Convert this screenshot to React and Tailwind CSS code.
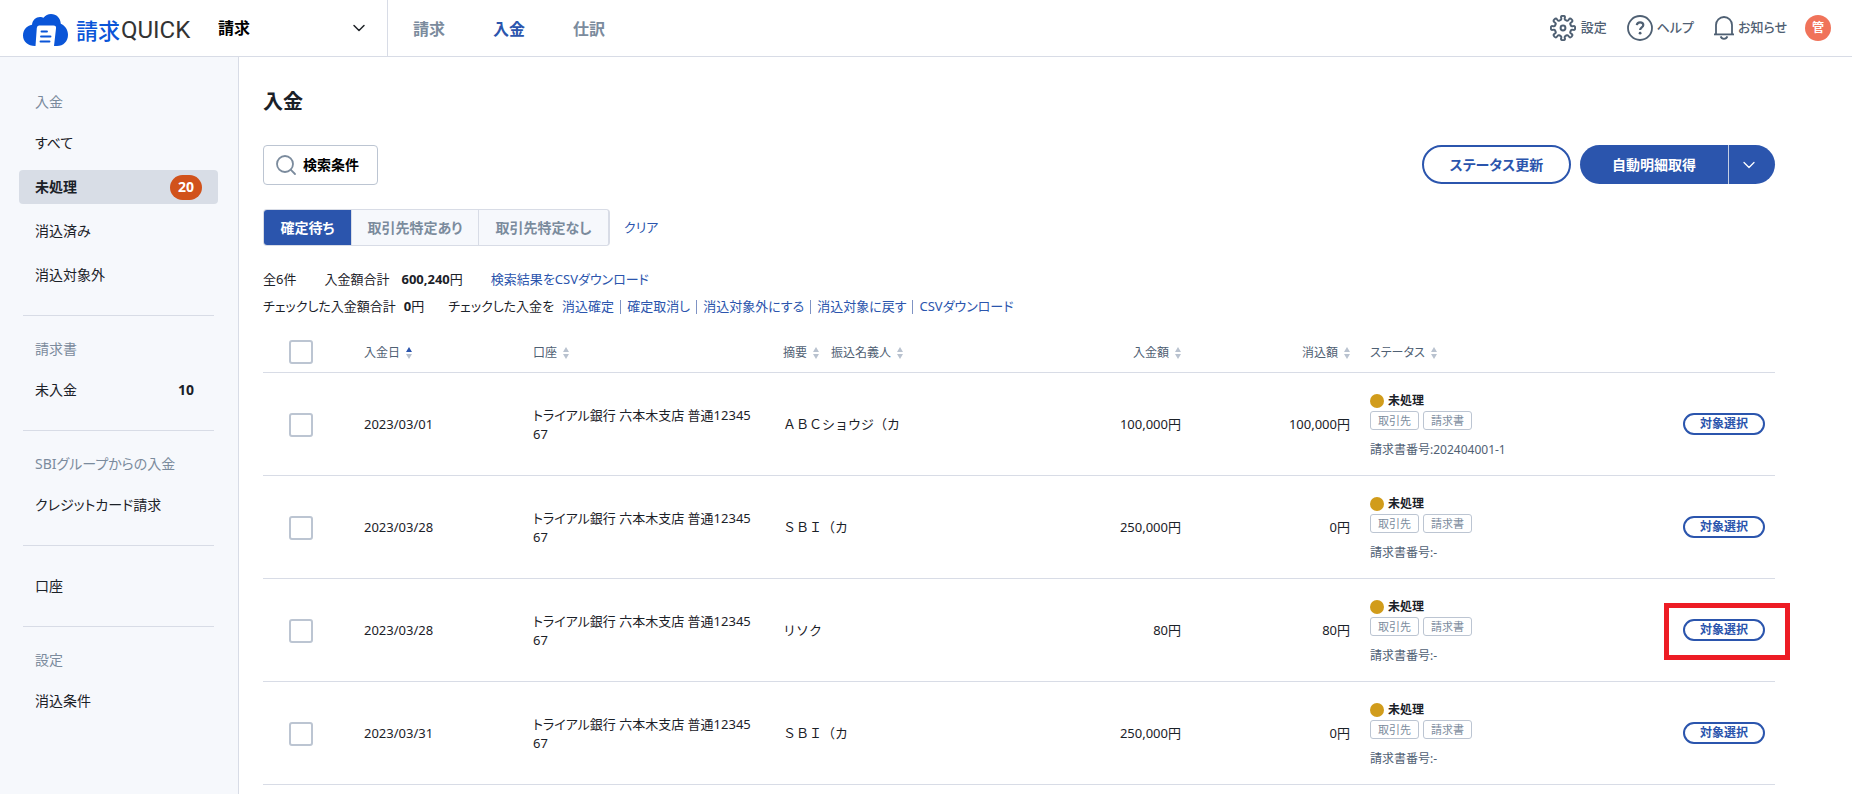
import React, { useState } from 'react';
import { ChevronDown, Search } from 'lucide-react';

const navItems = [
  { label: '請求', active: false },
  { label: '入金', active: true },
  { label: '仕訳', active: false },
];

const sideSections = [
  {
    title: '入金',
    items: [
      { label: 'すべて' },
      { label: '未処理', badge: 20, active: true },
      { label: '消込済み' },
      { label: '消込対象外' },
    ],
  },
  { title: '請求書', items: [{ label: '未入金', count: 10 }] },
  { title: 'SBIグループからの入金', items: [{ label: 'クレジットカード請求' }] },
  { items: [{ label: '口座' }] },
  { title: '設定', items: [{ label: '消込条件' }] },
];

const bulkActions = ['消込確定', '確定取消し', '消込対象外にする', '消込対象に戻す', 'CSVダウンロード'];

const account = 'トライアル銀行 六本木支店 普通1234567';

const deposits = [
  { id: 1, date: '2023/03/01', payer: 'ＡＢＣショウジ（カ', amount: '100,000円', cleared: '100,000円', invoice: '202404001-1' },
  { id: 2, date: '2023/03/28', payer: 'ＳＢＩ（カ', amount: '250,000円', cleared: '0円', invoice: '-' },
  { id: 3, date: '2023/03/28', payer: 'リソク', amount: '80円', cleared: '80円', invoice: '-', highlight: true },
  { id: 4, date: '2023/03/31', payer: 'ＳＢＩ（カ', amount: '250,000円', cleared: '0円', invoice: '-' },
];

// Eight rounded teeth around a 26px circle, smoothed through the midpoints
const gearPath = (() => {
  const pts = [];
  for (let i = 0; i < 8; i++) {
    [[-22.5, 8.2], [-9, 8.6], [-11, 12.4], [11, 12.4], [9, 8.6]].forEach(([offset, r]) => {
      const a = ((i * 45 + offset) * Math.PI) / 180;
      pts.push([13 + r * Math.sin(a), 13 - r * Math.cos(a)]);
    });
  }
  const mid = (p, q) => `${((p[0] + q[0]) / 2).toFixed(2)} ${((p[1] + q[1]) / 2).toFixed(2)}`;
  const curves = pts.map((p, i) => `Q${p[0].toFixed(2)} ${p[1].toFixed(2)} ${mid(p, pts[(i + 1) % pts.length])}`);
  return `M${mid(pts[pts.length - 1], pts[0])}${curves.join('')}Z`;
})();

function GearIcon() {
  return (
    <svg className="w-[26px] h-[26px]" viewBox="0 0 26 26" fill="none" stroke="currentColor" strokeWidth="2" strokeLinejoin="round">
      <path d={gearPath} />
      <circle cx="13" cy="13" r="2.4" />
    </svg>
  );
}

function HelpIcon() {
  return (
    <svg className="w-[26px] h-[26px]" viewBox="0 0 26 26" fill="none" stroke="currentColor" strokeWidth="1.8">
      <circle cx="13" cy="13" r="12" />
      <path d="M9.8 10.2c.2-1.9 1.5-2.9 3.3-2.9s3.2 1.1 3.2 2.7c0 2.4-3.2 2.5-3.2 5.1" strokeWidth="2.2" />
      <circle cx="13.1" cy="18.2" r="1.4" fill="currentColor" stroke="none" />
    </svg>
  );
}

function BellIcon() {
  return (
    <svg className="w-5 h-[26px]" viewBox="0 0 20 26" fill="none" stroke="currentColor" strokeWidth="1.8">
      <path d="M2 19.2V10a8 8 0 0 1 16 0v9.2" />
      <path d="M0 19.4h20" />
      <path d="M6.6 21.4c.5 1.4 1.8 2.4 3.4 2.4s2.9-1 3.4-2.4" />
    </svg>
  );
}

function Logo() {
  return (
    <a href="#" className="flex items-center w-[168px] pt-1 shrink-0 whitespace-nowrap" aria-label="請求QUICK">
      <svg className="w-[45px] h-8 shrink-0" viewBox="0 0 45 32">
        <path
          d="M12 32C5 32 0 27.500 0 21.500 0 15.500 4 11.500 9 10.700 9.500 6 13 3 17 3c1.500 0 2.500.3 3.500.8C22.300 1.400 25 0 28 0c5.500 0 9.500 4 9.800 9.700C42 11.500 45 15.800 45 20.800 45 27.500 40.500 32 34 32Z"
          fill="#0a55d8"
        />
        <path d="M16 11.500H30.500Q33.500 11.500 33 14.500L31 32H12.500L13.800 14Q14 11.500 16 11.500Z" fill="#fff" />
        <path d="M18.500 17.500h5.500M18 22.500h9.500M17.500 27.500h9" stroke="#0a55d8" strokeWidth="1.900" strokeLinecap="round" />
      </svg>
      <span className="ml-2 text-[22px] font-medium leading-8 text-[#0a55d8]">請求</span>
      <span className="ml-px font-['Roboto',sans-serif] text-2xl leading-8 text-[#333]">QUICK</span>
    </a>
  );
}

function Header() {
  return (
    <header className="h-[57px] shrink-0 flex items-stretch border-b border-[#d8dce6] bg-white pl-[23px] pr-[21px]">
      <Logo />
      <div className="relative flex items-center w-[197px] shrink-0 border-r border-[#d8dce6]">
        <select aria-label="サービス" className="appearance-none w-full h-full pl-[27px] font-bold text-base text-black bg-transparent outline-none">
          <option>請求</option>
        </select>
        <ChevronDown className="absolute right-[18px] w-5 h-5 text-[#1f2328] pointer-events-none" strokeWidth={1.8} />
      </div>
      <nav className="flex items-center gap-12 pl-[25px] pt-0.5 font-bold text-base">
        {navItems.map((item) => (
          <a key={item.label} href="#" className={item.active ? 'text-[#2b55ad]' : 'text-[#7b8b9d]'}>
            {item.label}
          </a>
        ))}
      </nav>
      <div className="ml-auto flex items-center text-[13px] font-medium text-[#4f6073]">
        <a href="#" className="flex items-center gap-[5px]"><GearIcon />設定</a>
        <a href="#" className="ml-5 flex items-center gap-1"><HelpIcon />ヘルプ</a>
        <a href="#" className="ml-5 flex items-center gap-1"><BellIcon />お知らせ</a>
        <button className="ml-[18px] w-[26px] h-[26px] rounded-full bg-[#f0735a] text-white text-xs font-bold">管</button>
      </div>
    </header>
  );
}

function Sidebar() {
  return (
    <aside className="w-[239px] shrink-0 bg-[#f6f8fc] border-r border-[#d8dce6] pt-3 text-sm leading-5 text-[#1b2128]">
      {sideSections.map((section, i) => (
        <section key={i} className={i > 0 ? 'before:block before:h-px before:ml-[23px] before:mr-6 before:bg-[#d8dce6]' : ''}>
          <div className="py-[23px]">
            {section.title && <h2 className="pl-[35px] mb-3.5 text-[#7b8b9d]">{section.title}</h2>}
            <ul className="flex flex-col gap-2.5 pl-[19px] pr-5">
              {section.items.map((item) => (
                <li key={item.label}>
                  <a
                    href="#"
                    className={`h-[34px] px-4 flex items-center justify-between rounded ${
                      item.active ? 'bg-[#d8dde6] font-bold' : ''
                    }`}
                  >
                    <span>{item.label}</span>
                    {item.badge && (
                      <span className="h-[25px] w-8 flex items-center justify-center rounded-full bg-[#d1521b] text-white">{item.badge}</span>
                    )}
                    {item.count && <span className="w-8 text-center font-bold">{item.count}</span>}
                  </a>
                </li>
              ))}
            </ul>
          </div>
        </section>
      ))}
    </aside>
  );
}

function SortIcon({ asc }) {
  return (
    <svg className="w-1.5 h-3" viewBox="0 0 6 12" fill="#b9c2cf">
      <path d="M3 0L6 5H0Z" fill={asc ? '#2b55ad' : undefined} />
      <path d="M0 7H6L3 12Z" />
    </svg>
  );
}

function SortButton({ label, asc }) {
  return (
    <button className="flex items-center gap-1.5 pt-0.5">
      {label}
      <SortIcon asc={asc} />
    </button>
  );
}

function CheckBox({ label }) {
  return (
    <input
      type="checkbox"
      aria-label={label}
      className="block ml-4 w-6 h-6 appearance-none rounded-[3px] border-2 border-[#bcc5d2] bg-white checked:bg-[#2b55ad]"
    />
  );
}

function DepositRow({ deposit }) {
  return (
    <tr className="h-[103px] border-b border-[#d8dce6]">
      <td className="px-2.5 pt-0.5">
        <CheckBox label={`${deposit.date} ${deposit.payer}`} />
      </td>
      <td className="px-2.5 pt-0.5">{deposit.date}</td>
      <td className="pl-2.5 pr-4 pt-0.5 break-all">{account}</td>
      <td className="px-2.5 pt-0.5 [font-feature-settings:normal]">{deposit.payer}</td>
      <td className="px-2.5 pt-0.5 text-right">{deposit.amount}</td>
      <td className="px-2.5 pt-0.5 text-right">{deposit.cleared}</td>
      <td className="px-2.5 pt-1.5 text-xs text-[#4f6073]">
        <div className="flex items-center gap-1 h-4 font-bold text-[#1b2128]">
          <span className="w-3.5 h-3.5 rounded-full bg-[#d19c1b]" />
          未処理
        </div>
        <div className="mt-0.5 flex gap-1 text-[11px] leading-[17px] text-[#7b8b9d]">
          <span className="px-[7px] rounded-[3px] border border-[#bcc5d2]">取引先</span>
          <span className="px-[7px] rounded-[3px] border border-[#bcc5d2]">請求書</span>
        </div>
        <div className="mt-2.5 leading-5 whitespace-nowrap">請求書番号:{deposit.invoice}</div>
      </td>
      <td className="px-2.5">
        <div className="relative w-fit ml-auto">
          <button className="block w-[82px] h-[22px] rounded-full border-2 border-[#2b55ad] text-xs leading-none font-bold text-[#2b55ad] bg-white">
            対象選択
          </button>
          {deposit.highlight && (
            <div className="absolute -top-4 -bottom-[19px] -left-[19px] -right-[25px] border-[5px] border-[#ed1c24] pointer-events-none" />
          )}
        </div>
      </td>
    </tr>
  );
}

const tabs = ['確定待ち', '取引先特定あり', '取引先特定なし'];

export default function App() {
  const [tab, setTab] = useState(tabs[0]);

  return (
    <div className="min-h-screen flex flex-col bg-white font-['Noto_Sans','Noto_Sans_CJK_JP',sans-serif] [font-feature-settings:'palt'] text-[#1b2128]">
      <Header />
      <div className="flex-1 flex">
        <Sidebar />
        <main className="flex-1 min-w-0 pl-6 pr-[77px] pt-[31px] text-sm">
          <h1 className="text-xl leading-7 font-bold">入金</h1>

          <div className="mt-[29px] flex items-start">
            <button className="h-10 w-[115px] flex items-center pl-[10px] gap-[5px] rounded border border-[#bcc5d2] font-bold text-black">
              <Search className="w-6 h-6 text-[#7b8b9d]" strokeWidth={1.8} />
              検索条件
            </button>
            <button className="ml-auto h-[39px] w-[149px] rounded-full border-2 border-[#2b55ad] font-bold text-[#2b55ad]">ステータス更新</button>
            <div className="ml-[9px] h-[39px] flex rounded-full overflow-hidden bg-[#2b55ad] text-white">
              <button className="w-[148px] font-bold">自動明細取得</button>
              <button aria-label="その他の取得方法" className="w-[47px] border-l border-[#c5cfe4] flex items-center pl-2.5">
                <ChevronDown className="w-5 h-5" strokeWidth={1.5} />
              </button>
            </div>
          </div>

          <div className="mt-6 flex items-center">
            <div className="h-[37px] flex rounded border border-r-2 border-[#d8dce6] overflow-hidden">
              {tabs.map((t) => (
                <button
                  key={t}
                  onClick={() => setTab(t)}
                  className={`font-bold border-r last:border-r-0 border-[#d8dce6] first:w-[88px] w-[127px] last:w-[129px] ${
                    t === tab ? 'bg-[#2b55ad] text-white' : 'bg-[#f6f8fc] text-[#7b8b9d]'
                  }`}
                >
                  {t}
                </button>
              ))}
            </div>
            <a href="#" className="ml-3.5 text-[13px] text-[#2b55ad]">クリア</a>
          </div>

          <div className="mt-5 text-[13px] leading-[27px]">
            <div className="flex">
              <span>全6件</span>
              <span className="ml-7">入金額合計</span>
              <span className="ml-3"><b>600,240</b>円</span>
              <a href="#" className="ml-7 text-[#2b55ad]">検索結果をCSVダウンロード</a>
            </div>
            <div className="flex">
              <span>チェックした入金額合計</span>
              <span className="ml-2"><b>0</b>円</span>
              <span className="ml-6">チェックした入金を</span>
              <div className="ml-2 flex items-center text-[#2b55ad]">
                {bulkActions.map((action, i) => (
                  <React.Fragment key={action}>
                    {i > 0 && <span className="mx-1.5 w-px h-3.5 bg-[#7f93c4]" />}
                    <a href="#">{action}</a>
                  </React.Fragment>
                ))}
              </div>
            </div>
          </div>

          <table className="mt-3 w-full table-fixed border-collapse text-[13px] leading-[19px]">
            <colgroup>
              <col className="w-[91px]" />
              <col className="w-[169px]" />
              <col className="w-[250px]" />
              <col className="w-[249px]" />
              <col className="w-[169px]" />
              <col className="w-[169px]" />
              <col className="w-[169px]" />
              <col />
            </colgroup>
            <thead>
              <tr className="h-10 border-b border-[#d8dce6] text-xs text-[#4f6073] text-left [&>th]:px-2.5 [&>th]:font-normal">
                <th><CheckBox label="すべて選択" /></th>
                <th><SortButton label="入金日" asc /></th>
                <th><SortButton label="口座" /></th>
                <th>
                  <div className="flex gap-3">
                    <SortButton label="摘要" />
                    <SortButton label="振込名義人" />
                  </div>
                </th>
                <th><div className="flex justify-end"><SortButton label="入金額" /></div></th>
                <th><div className="flex justify-end"><SortButton label="消込額" /></div></th>
                <th><SortButton label="ステータス" /></th>
                <th />
              </tr>
            </thead>
            <tbody>
              {deposits.map((deposit) => (
                <DepositRow key={deposit.id} deposit={deposit} />
              ))}
            </tbody>
          </table>
        </main>
      </div>
    </div>
  );
}
